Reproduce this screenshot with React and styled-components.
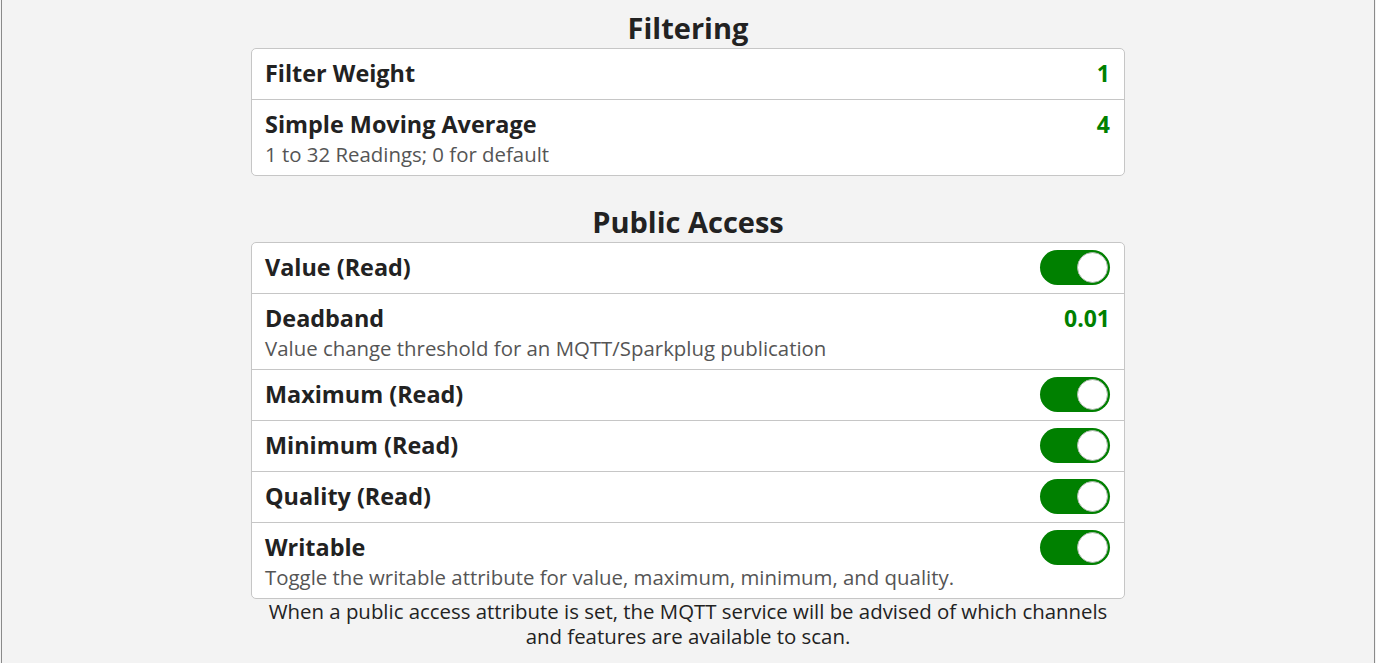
import React from 'react'
import styled, { createGlobalStyle } from 'styled-components'

const GlobalStyle = createGlobalStyle`
  html, body {
    margin: 0;
    padding: 0;
    background: #f3f3f3;
  }
  body {
    font-family: "Open Sans", "Noto Sans", sans-serif;
    color: #222;
  }
`

const sections = [
  {
    title: 'Filtering',
    rows: [
      { label: 'Filter Weight', value: '1' },
      { label: 'Simple Moving Average', hint: '1 to 32 Readings; 0 for default', value: '4' }
    ]
  },
  {
    title: 'Public Access',
    rows: [
      { label: 'Value (Read)', toggle: true },
      { label: 'Deadband', hint: 'Value change threshold for an MQTT/Sparkplug publication', value: '0.01' },
      { label: 'Maximum (Read)', toggle: true },
      { label: 'Minimum (Read)', toggle: true },
      { label: 'Quality (Read)', toggle: true },
      { label: 'Writable', hint: 'Toggle the writable attribute for value, maximum, minimum, and quality.', toggle: true }
    ],
    note: 'When a public access attribute is set, the MQTT service will be advised of which channels and features are available to scan.'
  }
]

const Toggle = ({ on }) => (
  <Track $on={on}>
    <Knob />
  </Track>
)

const App = () => {
  return (
    <Page>
      <GlobalStyle />
      <Column>
        {sections.map(section => (
          <Section key={section.title}>
            <Heading>{section.title}</Heading>
            <Card>
              {section.rows.map(row => (
                <Row key={row.label}>
                  <Text>
                    <Label>{row.label}</Label>
                    {row.hint && <Hint>{row.hint}</Hint>}
                  </Text>
                  {row.toggle ? <Toggle on /> : <Value>{row.value}</Value>}
                </Row>
              ))}
            </Card>
            {section.note && <Note>{section.note}</Note>}
          </Section>
        ))}
      </Column>
    </Page>
  )
}

export default App

//region Style

const Page = styled.div`
  box-sizing: border-box;
  min-height: 663px;
  margin: 0 1px;
  border-left: 1px solid #8a8a8a;
  border-right: 1px solid #8a8a8a;
  padding-top: 10px;
`

const Column = styled.div`
  width: 874px;
  margin: 0 auto;
  display: flex;
  flex-direction: column;
  gap: 28px;
`

const Section = styled.section`
  display: flex;
  flex-direction: column;
`

const Heading = styled.h2`
  margin: 0 0 2px;
  font-size: 29px;
  line-height: 35px;
  padding-bottom: 1px;
  font-weight: 700;
  text-align: center;
  color: #222;
`

const Card = styled.div`
  background: #fff;
  border: 1px solid #c6c6c6;
  border-radius: 5px;
`

const Row = styled.div`
  display: flex;
  justify-content: space-between;
  align-items: flex-start;
  padding: 10px 14px 10px 13px;
  & + & {
    border-top: 1px solid #c6c6c6;
  }
`

const Text = styled.div`
  display: flex;
  flex-direction: column;
`

const Label = styled.div`
  font-size: 23.4px;
  line-height: 29px;
  margin-bottom: 1px;
  font-weight: 700;
  color: #222;
`

const Hint = styled.div`
  margin: 2px 0 -1px;
  font-size: 20.4px;
  line-height: 24px;
  color: #555;
`

const Value = styled.div`
  font-size: 23px;
  line-height: 29px;
  font-weight: 700;
  color: #008000;
`

const Track = styled.div`
  box-sizing: border-box;
  width: 70px;
  height: 35px;
  margin: -3px 0 -4px;
  border-radius: 18px;
  background: ${p => (p.$on ? '#008000' : '#ccc')};
  display: flex;
  justify-content: flex-end;
  align-items: center;
  padding: 2px;
`

const Knob = styled.div`
  box-sizing: border-box;
  width: 31px;
  height: 31px;
  border-radius: 50%;
  background: #fff;
  border: 1px solid #a8b8a8;
`

const Note = styled.p`
  margin: 0;
  padding: 0 10px;
  font-size: 20.4px;
  line-height: 25px;
  text-align: center;
  color: #222;
`
//endregion
